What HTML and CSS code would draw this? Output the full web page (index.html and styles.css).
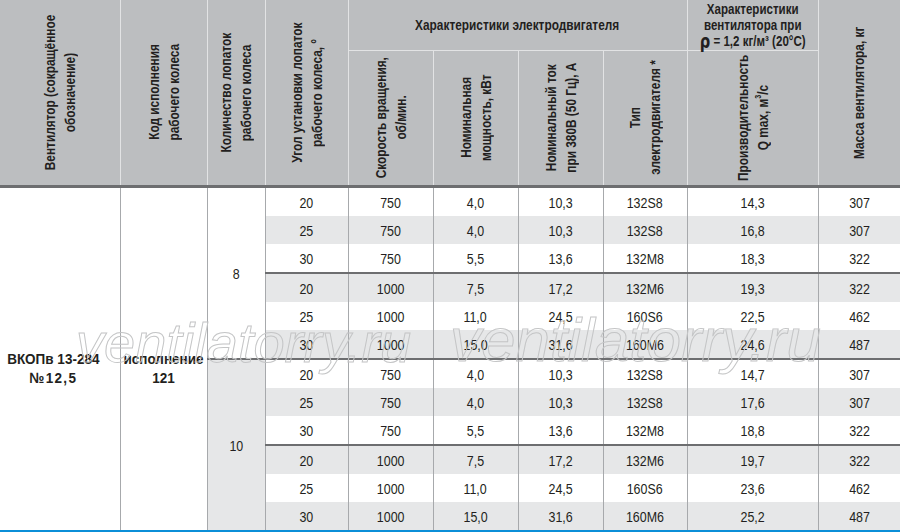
FILE: index.html
```html
<!DOCTYPE html>
<html lang="ru">
<head>
<meta charset="utf-8">
<title>ВКОПв 13-284 №12,5</title>
<link rel="stylesheet" href="styles.css">
</head>
<body>
<div class="page">
<table class="spec">
  <colgroup>
    <col class="c1"><col class="c2"><col class="c3"><col class="c4"><col class="c5">
    <col class="c6"><col class="c7"><col class="c8"><col class="c9"><col class="c10">
  </colgroup>
  <thead>
    <tr class="row-top">
      <th rowspan="2" class="tall first"><div class="vwrap v-full"><div class="vert">Вентилятор (сокращённое<br>обозначение)</div></div></th>
      <th rowspan="2" class="tall"><div class="vwrap v-full"><div class="vert">Код исполнения<br>рабочего колеса</div></div></th>
      <th rowspan="2" class="tall"><div class="vwrap v-full"><div class="vert">Количество лопаток<br>рабочего колеса</div></div></th>
      <th rowspan="2" class="tall"><div class="vwrap v-full"><div class="vert">Угол установки лопаток<br>рабочего колеса, °</div></div></th>
      <th colspan="4" class="group"><div class="hcell"><span class="sq">Характеристики электродвигателя</span></div></th>
      <th class="group group-fan"><div class="hcell"><span class="sq">Характеристики<br>вентилятора при<br><span class="rho">ρ</span> = 1,2 кг/м³ (20°С)</span></div></th>
      <th rowspan="2" class="tall last"><div class="vwrap v-full"><div class="vert">Масса вентилятора, кг</div></div></th>
    </tr>
    <tr class="row-sub">
      <th><div class="vwrap v-sub"><div class="vert">Скорость вращения,<br>об/мин.</div></div></th>
      <th><div class="vwrap v-sub"><div class="vert">Номинальная<br>мощность, кВт</div></div></th>
      <th><div class="vwrap v-sub"><div class="vert">Номинальный ток<br>при 380В (50 Гц), А</div></div></th>
      <th><div class="vwrap v-sub"><div class="vert">Тип<br>электродвигателя *</div></div></th>
      <th><div class="vwrap v-sub"><div class="vert">Производительность<br>Q max, м<sup>3</sup>/с</div></div></th>
    </tr>
  </thead>
  <tbody>
    <tr>
      <td rowspan="12" class="name name-fan"><div class="hcell name-text"><span class="nm">ВКОПв 13-284<br><span class="num">№12,5</span></span></div></td>
      <td rowspan="12" class="name"><div class="hcell name-text"><span class="nm">исполнение<br>121</span></div></td>
      <td rowspan="6" class="blades"><span class="t">8</span></td>
      <td><span class="t">20</span></td><td><span class="t">750</span></td><td><span class="t">4,0</span></td><td><span class="t">10,3</span></td><td><span class="t">132S8</span></td><td><span class="t">14,3</span></td><td><span class="t">307</span></td>
    </tr>
    <tr class="alt"><td><span class="t">25</span></td><td><span class="t">750</span></td><td><span class="t">4,0</span></td><td><span class="t">10,3</span></td><td><span class="t">132S8</span></td><td><span class="t">16,8</span></td><td><span class="t">307</span></td></tr>
    <tr><td><span class="t">30</span></td><td><span class="t">750</span></td><td><span class="t">5,5</span></td><td><span class="t">13,6</span></td><td><span class="t">132M8</span></td><td><span class="t">18,3</span></td><td><span class="t">322</span></td></tr>
    <tr class="alt sep"><td><span class="t">20</span></td><td><span class="t">1000</span></td><td><span class="t">7,5</span></td><td><span class="t">17,2</span></td><td><span class="t">132M6</span></td><td><span class="t">19,3</span></td><td><span class="t">322</span></td></tr>
    <tr><td><span class="t">25</span></td><td><span class="t">1000</span></td><td><span class="t">11,0</span></td><td><span class="t">24,5</span></td><td><span class="t">160S6</span></td><td><span class="t">22,5</span></td><td><span class="t">462</span></td></tr>
    <tr class="alt"><td><span class="t">30</span></td><td><span class="t">1000</span></td><td><span class="t">15,0</span></td><td><span class="t">31,6</span></td><td><span class="t">160M6</span></td><td><span class="t">24,6</span></td><td><span class="t">487</span></td></tr>
    <tr class="sep">
      <td rowspan="6" class="blades grey"><span class="t">10</span></td>
      <td><span class="t">20</span></td><td><span class="t">750</span></td><td><span class="t">4,0</span></td><td><span class="t">10,3</span></td><td><span class="t">132S8</span></td><td><span class="t">14,7</span></td><td><span class="t">307</span></td>
    </tr>
    <tr class="alt"><td><span class="t">25</span></td><td><span class="t">750</span></td><td><span class="t">4,0</span></td><td><span class="t">10,3</span></td><td><span class="t">132S8</span></td><td><span class="t">17,6</span></td><td><span class="t">307</span></td></tr>
    <tr><td><span class="t">30</span></td><td><span class="t">750</span></td><td><span class="t">5,5</span></td><td><span class="t">13,6</span></td><td><span class="t">132M8</span></td><td><span class="t">18,8</span></td><td><span class="t">322</span></td></tr>
    <tr class="alt sep"><td><span class="t">20</span></td><td><span class="t">1000</span></td><td><span class="t">7,5</span></td><td><span class="t">17,2</span></td><td><span class="t">132M6</span></td><td><span class="t">19,7</span></td><td><span class="t">322</span></td></tr>
    <tr><td><span class="t">25</span></td><td><span class="t">1000</span></td><td><span class="t">11,0</span></td><td><span class="t">24,5</span></td><td><span class="t">160S6</span></td><td><span class="t">23,6</span></td><td><span class="t">462</span></td></tr>
    <tr class="alt"><td><span class="t">30</span></td><td><span class="t">1000</span></td><td><span class="t">15,0</span></td><td><span class="t">31,6</span></td><td><span class="t">160M6</span></td><td><span class="t">25,2</span></td><td><span class="t">487</span></td></tr>
  </tbody>
</table>
<div class="bar"></div>
<div class="wm wm-1">ventilatorry.ru</div>
<div class="wm wm-2">ventilatorry.ru</div>
</div>
</body>
</html>
```
FILE: styles.css
```css
html, body {
  margin: 0;
  padding: 0;
  overflow: hidden;
  background: #ffffff;
}

.page {
  position: relative;
  width: 900px;
  height: 532px;
  overflow: hidden;
  font-family: "Liberation Sans", Arial, sans-serif;
  color: #231f20;
}

.spec {
  width: 900px;
  border-collapse: collapse;
  table-layout: fixed;
}

.c1 { width: 120px; }
.c2 { width: 87px; }
.c3 { width: 58px; }
.c4 { width: 83px; }
.c5 { width: 85px; }
.c6 { width: 85px; }
.c7 { width: 85px; }
.c8 { width: 84px; }
.c9 { width: 131px; }
.c10 { width: 82px; }

/* ---------- header ---------- */

.spec th {
  background: #bcbec0;
  border: 1px solid #e2e3e4;
  border-top: none;
  font-weight: bold;
  font-size: 15px;
  padding: 0;
  text-align: center;
  vertical-align: middle;
  overflow: visible;
}

.spec th.first { border-left: none; }
.spec th.last { border-right: none; }

.row-top th { height: 50px; }
.row-sub th { height: 134px; }

.spec th.tall,
.row-sub th {
  border-bottom: 3px solid #6d6e70;
}

.hcell {
  display: flex;
  justify-content: center;
  align-items: center;
}

.sq {
  display: inline-block;
  white-space: nowrap;
  transform: scaleX(0.79);
}

.group { line-height: 16px; }

.group-fan .sq { transform: scaleX(0.77); }

.rho {
  font-family: "DejaVu Sans", sans-serif;
  font-size: 19px;
  font-weight: bold;
  line-height: 14px;
  vertical-align: -2px;
}

.vwrap {
  display: flex;
  align-items: center;
  justify-content: center;
}

.v-full { height: 184px; }
.v-sub { height: 134px; }

.vert {
  flex: none;
  writing-mode: vertical-rl;
  transform: rotate(180deg) scaleY(0.79);
  line-height: 20px;
  text-align: center;
  white-space: nowrap;
}

.vert sup {
  font-size: 9px;
  line-height: 0;
  vertical-align: 5px;
}

/* ---------- body ---------- */

.spec td {
  height: 28px;
  padding: 0;
  text-align: center;
  vertical-align: middle;
  font-size: 15px;
  border-left: 1px solid #a7a9ac;
  border-right: 1px solid #a7a9ac;
  background: #ffffff;
}

.t {
  display: inline-block;
  transform: scaleX(0.83);
}

.spec tr.alt td { background: #e6e7e8; }

.spec tr.sep td { border-top: 2px solid #6d6e70; }

.spec td.name {
  background: #ffffff;
  font-weight: bold;
  font-size: 15px;
  line-height: 19px;
}

.nm {
  display: inline-block;
  white-space: nowrap;
  text-align: center;
  transform: scaleX(0.9);
}

.num { letter-spacing: 1.5px; }

.spec td.name:first-child { border-left: none; }

.name-fan .name-text { padding-right: 12px; }

.name-text { padding-top: 18px; }

.spec td.blades { background: #ffffff; }
.spec td.blades.grey { background: #e6e7e8; }

.spec td:last-child { border-right: none; }

.bar {
  height: 12px;
  background: #0b8fd8;
}

/* ---------- watermark overlay ---------- */

.wm {
  position: absolute;
  font-family: "Liberation Sans", Arial, sans-serif;
  font-style: italic;
  color: transparent;
  -webkit-text-stroke: 1px #c4c5c6;
  white-space: nowrap;
  pointer-events: none;
}

.wm-1 {
  left: 76px;
  top: 315px;
  font-size: 56px;
  line-height: 56px;
}

.wm-2 {
  left: 450px;
  top: 309px;
  font-size: 62px;
  line-height: 62px;
}
```
